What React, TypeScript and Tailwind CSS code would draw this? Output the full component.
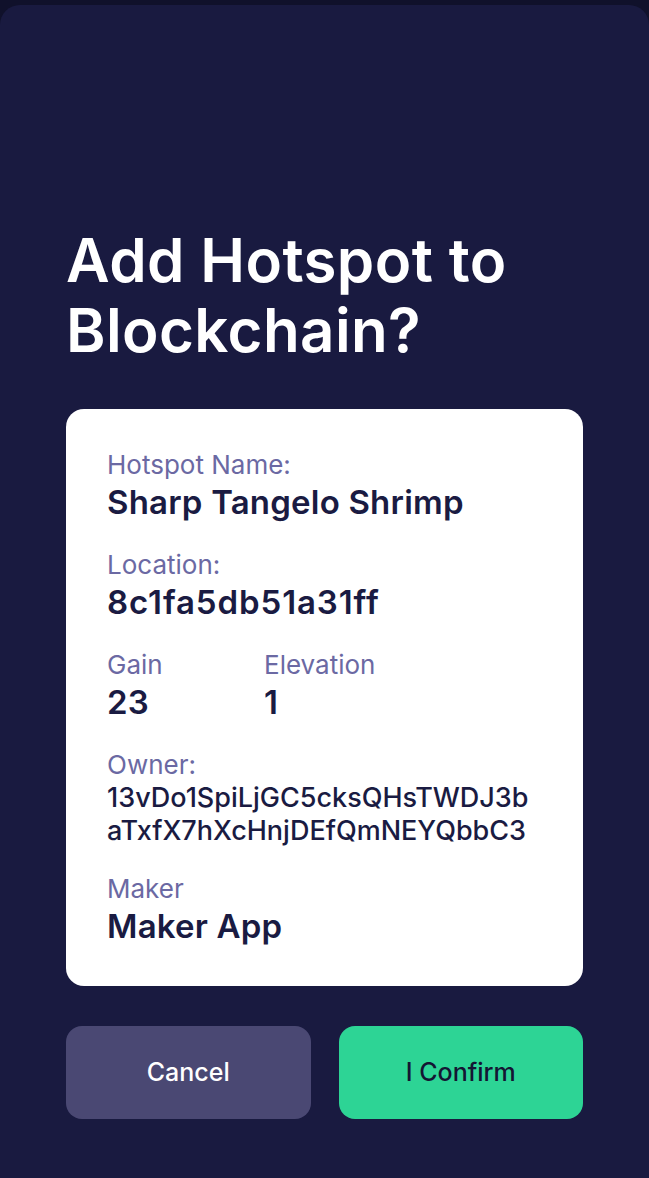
export default function App() {
  return (
    <div className="min-h-[1178px] w-full bg-[#10112b] pt-[5px]" style={{ fontFamily: 'Inter, "Noto Sans", sans-serif' }}>
      <div className="flex min-h-[1173px] flex-col rounded-t-[20px] bg-[#191a40] px-[66px] pt-[220px]">
        <h1 className="text-[60px] font-semibold leading-[70px] tracking-[0.4px] text-white">
          Add Hotspot to
          <br />
          Blockchain?
        </h1>

        <div className="mt-[44px] rounded-[18px] bg-white px-[41px] pt-[40px] pb-[39px]">
          <Field label="Hotspot Name:" value="Sharp Tangelo Shrimp" />
          <Field label="Location:" value="8c1fa5db51a31ff" wide />
          <div className="flex">
            <div className="w-[157px]">
              <Field label="Gain" value="23" />
            </div>
            <Field label="Elevation" value="1" />
          </div>
          <div className="mb-[26px]">
            <div className="text-[26px] leading-[32px] text-[#6b69a3]">Owner:</div>
            <div className="text-[27px] font-medium leading-[33px] text-[#1a1b42]">
              13vDo1SpiLjGC5cksQHsTWDJ3b
              <br />
              aTxfX7hXcHnjDEfQmNEYQbbC3
            </div>
          </div>
          <Field label="Maker" value="Maker App" last />
        </div>

        <div className="mt-[40px] flex gap-[28px]">
          <button className="h-[93px] flex-1 rounded-[16px] bg-[#4a4873] text-[25px] font-medium text-white">
            Cancel
          </button>
          <button className="h-[93px] flex-1 rounded-[16px] bg-[#2dd495] text-[25px] font-medium text-[#141533]">
            I Confirm
          </button>
        </div>
      </div>
    </div>
  )
}

function Field({ label, value, last, wide }: { label: string; value: string; last?: boolean; wide?: boolean }) {
  return (
    <div className={last ? '' : 'mb-[26px]'}>
      <div className="text-[26px] leading-[32px] text-[#6b69a3]">{label}</div>
      <div
        className={
          wide
            ? 'text-[33px] font-semibold leading-[42px] tracking-[0.9px] text-[#1a1b42]'
            : 'text-[33px] font-semibold leading-[42px] tracking-[0.2px] text-[#1a1b42]'
        }
      >
        {value}
      </div>
    </div>
  )
}
